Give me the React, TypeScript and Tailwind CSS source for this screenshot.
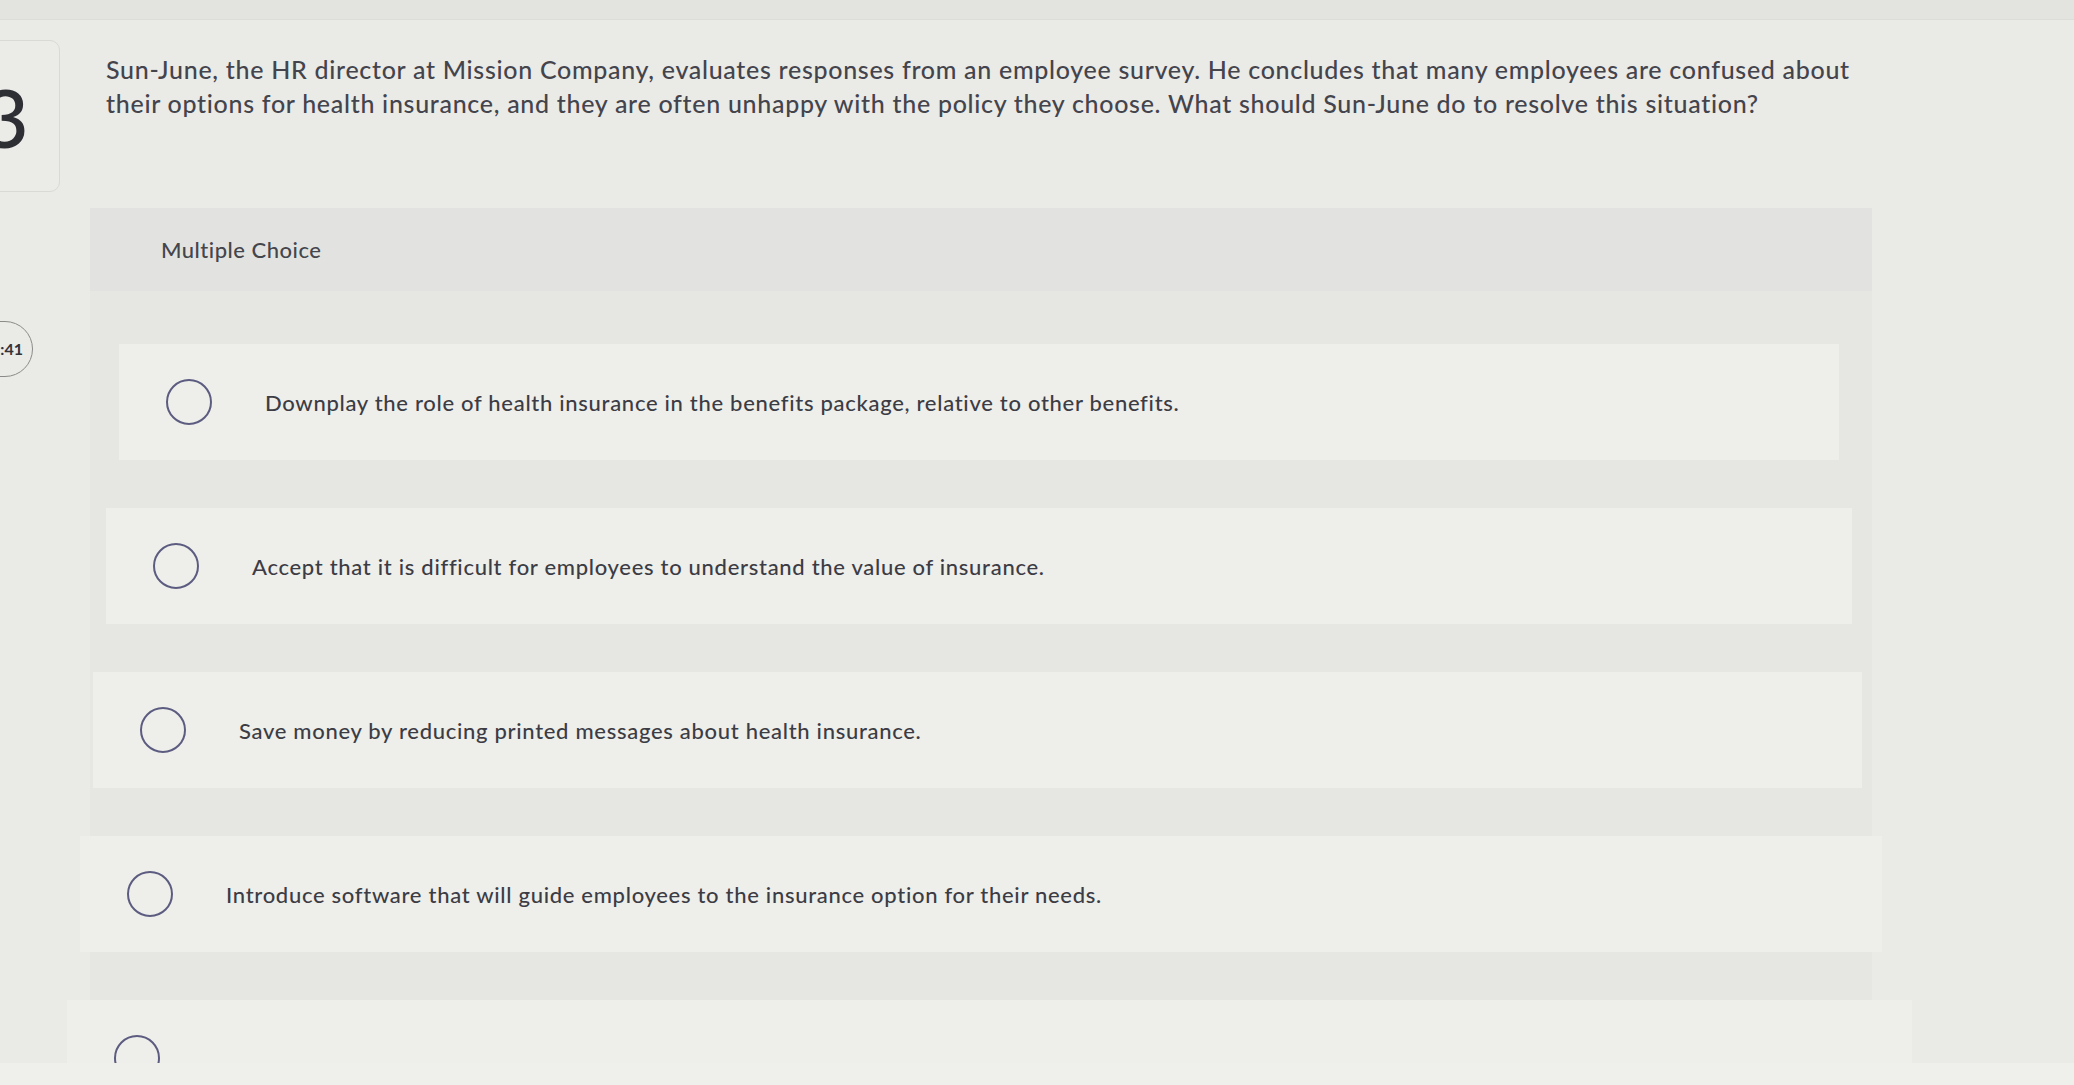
import React from 'react'

const options = [
  {
    text: 'Downplay the role of health insurance in the benefits package, relative to other benefits.',
    row: 'ml-[29px] mr-[33px]',
  },
  {
    text: 'Accept that it is difficult for employees to understand the value of insurance.',
    row: 'ml-[16px] mr-[20px]',
  },
  {
    text: 'Save money by reducing printed messages about health insurance.',
    row: 'ml-[3px] mr-[10px]',
  },
  {
    text: 'Introduce software that will guide employees to the insurance option for their needs.',
    row: 'ml-[-10px] mr-[-10px]',
  },
  {
    text: '',
    row: 'ml-[-23px] mr-[-40px]',
  },
]

function Radio() {
  return <span className="block w-[46px] h-[46px] shrink-0 rounded-full border-[2px] border-[#5c5c80]" />
}

export default function App() {
  return (
    <div className="w-[2074px] h-[1085px] overflow-hidden bg-[#eaeae7] font-['Lato','Liberation_Sans',sans-serif] text-[#3f3f47] flex flex-col">
      <div className="h-[20px] shrink-0 bg-[#e3e3e0] border-b border-[#dcdcd8]" />

      <div className="flex-1 min-h-0 flex overflow-hidden">
        <aside className="w-[90px] shrink-0 flex flex-col">
          <div className="mt-[20px] ml-[-60px] w-[120px] h-[152px] rounded-[10px] border border-[#d9d9d5] bg-[#ebebe8] flex items-center justify-center pl-[10px]">
            <span className="text-[82px] leading-none font-medium text-[#2e2e35]">3</span>
          </div>
          <div className="mt-[129px] ml-[-60px] w-[93px] h-[56px] rounded-full border-[1.5px] border-[#8a8a88] flex items-center justify-end pr-[9px] text-[16px] font-bold text-[#333338]">
            :41
          </div>
        </aside>

        <main className="flex-1 min-w-0 flex flex-col">
          <p className="mt-[32px] ml-[16px] w-[1790px] text-[25px] leading-[34px] tracking-[0.7px] font-medium text-[#44444c]">
            Sun-June, the HR director at Mission Company, evaluates responses from an employee survey. He concludes that many
            employees are confused about their options for health insurance, and they are often unhappy with the policy they
            choose. What should Sun-June do to resolve this situation?
          </p>

          <section className="mt-[88px] w-[1782px] flex flex-col">
            <div className="h-[83px] bg-[#e2e3e0] flex items-center pl-[71px] text-[22px] tracking-[0.5px] font-medium text-[#45454c]">
              Multiple Choice
            </div>
            <div className="bg-[#e6e6e3] pt-[53px] flex flex-col gap-[48px]">
              {options.map((o, i) => (
                <div key={i} className={`h-[116px] bg-[#eeeeeb] flex items-center pl-[47px] ${o.row}`}>
                  <Radio />
                  <span className="ml-[53px] text-[22px] tracking-[0.7px] font-medium text-[#3c3c44]">{o.text}</span>
                </div>
              ))}
            </div>
          </section>
        </main>
      </div>

      <div className="h-[22px] shrink-0 bg-[#efefec]" />
    </div>
  )
}
